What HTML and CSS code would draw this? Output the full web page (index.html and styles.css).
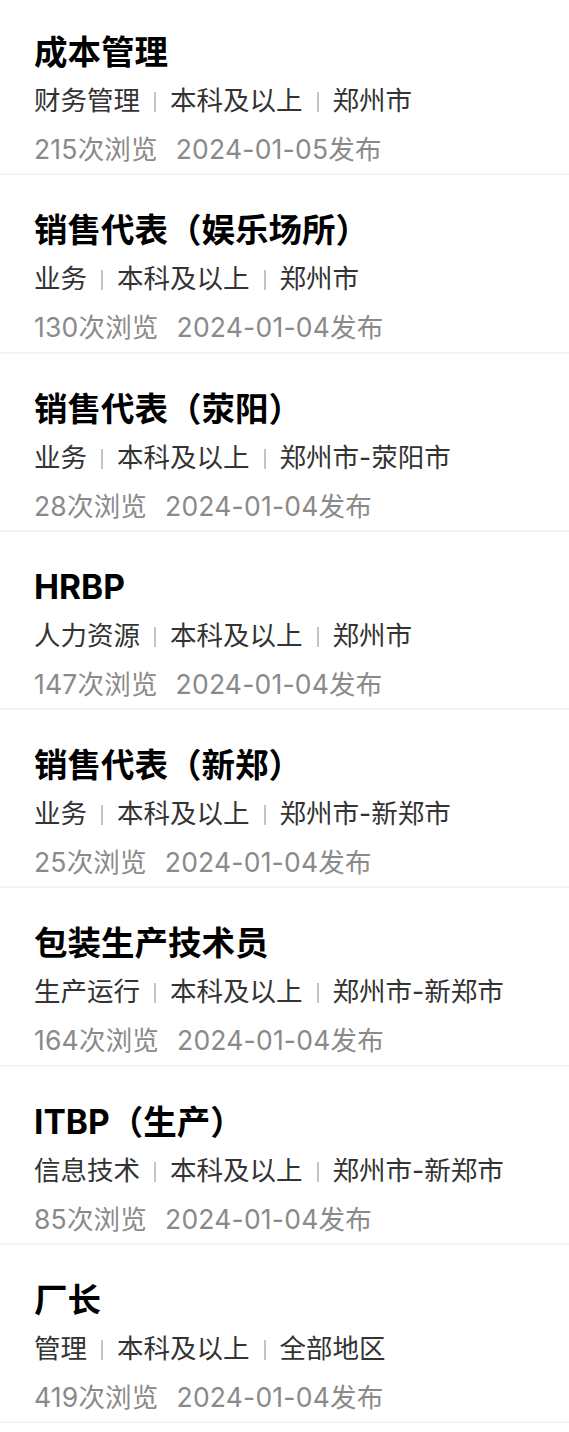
FILE: index.html
```html
<!DOCTYPE html>
<html lang="zh-CN">
<head>
  <meta charset="UTF-8" />
  <meta name="viewport" content="width=device-width, initial-scale=1.0"/>
  <title>职位列表</title>
  <link rel="stylesheet" href="styles.css">
</head>
<body>
  <main class="job-list" id="jobList"></main>

  <script>
    // 职位数据
    const jobs = [
      { title: "成本管理", type: "财务管理", edu: "本科及以上", city: "郑州市", views: 215, date: "2024-01-05" },
      { title: "销售代表（娱乐场所）", type: "业务", edu: "本科及以上", city: "郑州市", views: 130, date: "2024-01-04" },
      { title: "销售代表（荥阳）", type: "业务", edu: "本科及以上", city: "郑州市-荥阳市", views: 28, date: "2024-01-04" },
      { title: "HRBP", type: "人力资源", edu: "本科及以上", city: "郑州市", views: 147, date: "2024-01-04" },
      { title: "销售代表（新郑）", type: "业务", edu: "本科及以上", city: "郑州市-新郑市", views: 25, date: "2024-01-04" },
      { title: "包装生产技术员", type: "生产运行", edu: "本科及以上", city: "郑州市-新郑市", views: 164, date: "2024-01-04" },
      { title: "ITBP（生产）", type: "信息技术", edu: "本科及以上", city: "郑州市-新郑市", views: 85, date: "2024-01-04" },
      { title: "厂长", type: "管理", edu: "本科及以上", city: "全部地区", views: 419, date: "2024-01-04" }
    ];

    const jobList = document.getElementById('jobList');

    jobs.forEach(job => {
      const item = document.createElement('div');
      item.className = 'job-item';
      item.innerHTML = `
        <h2 class="job-title">${job.title}</h2>
        <p class="job-info">
          <span>${job.type}</span><span class="divider"></span><span>${job.edu}</span><span class="divider"></span><span>${job.city}</span>
        </p>
        <p class="job-meta">
          <span>${job.views}次浏览</span><span class="job-date">${job.date}发布</span>
        </p>
      `;
      jobList.appendChild(item);
    });
  </script>
</body>
</html>
```

FILE: styles.css
```css
body {
  margin: 0;
  font-family: Inter, "Noto Sans CJK SC", sans-serif;
  background-color: #fff;
  color: #000;
}

.job-item {
  padding: 33px 34px 0;
  border-bottom: 2px solid #f4f4f4;
}

.job-item:first-child {
  padding-top: 30px;
}

.job-title {
  margin: 0;
  font-size: 33.5px;
  line-height: 44px;
  font-weight: 700;
  color: #000;
}

.job-info {
  display: flex;
  align-items: center;
  margin: 0;
  font-size: 26.5px;
  line-height: 52px;
  color: #333;
}

.job-info .divider {
  display: block;
  flex: none;
  width: 2px;
  height: 20px;
  margin: 4px 14px 0;
  background-color: #c4c4c4;
}

.job-meta {
  margin: 0;
  font-size: 26.5px;
  line-height: 47.3px;
  letter-spacing: 0.2px;
  color: #8a8a8a;
}

.job-date {
  margin-left: 18px;
}
```
